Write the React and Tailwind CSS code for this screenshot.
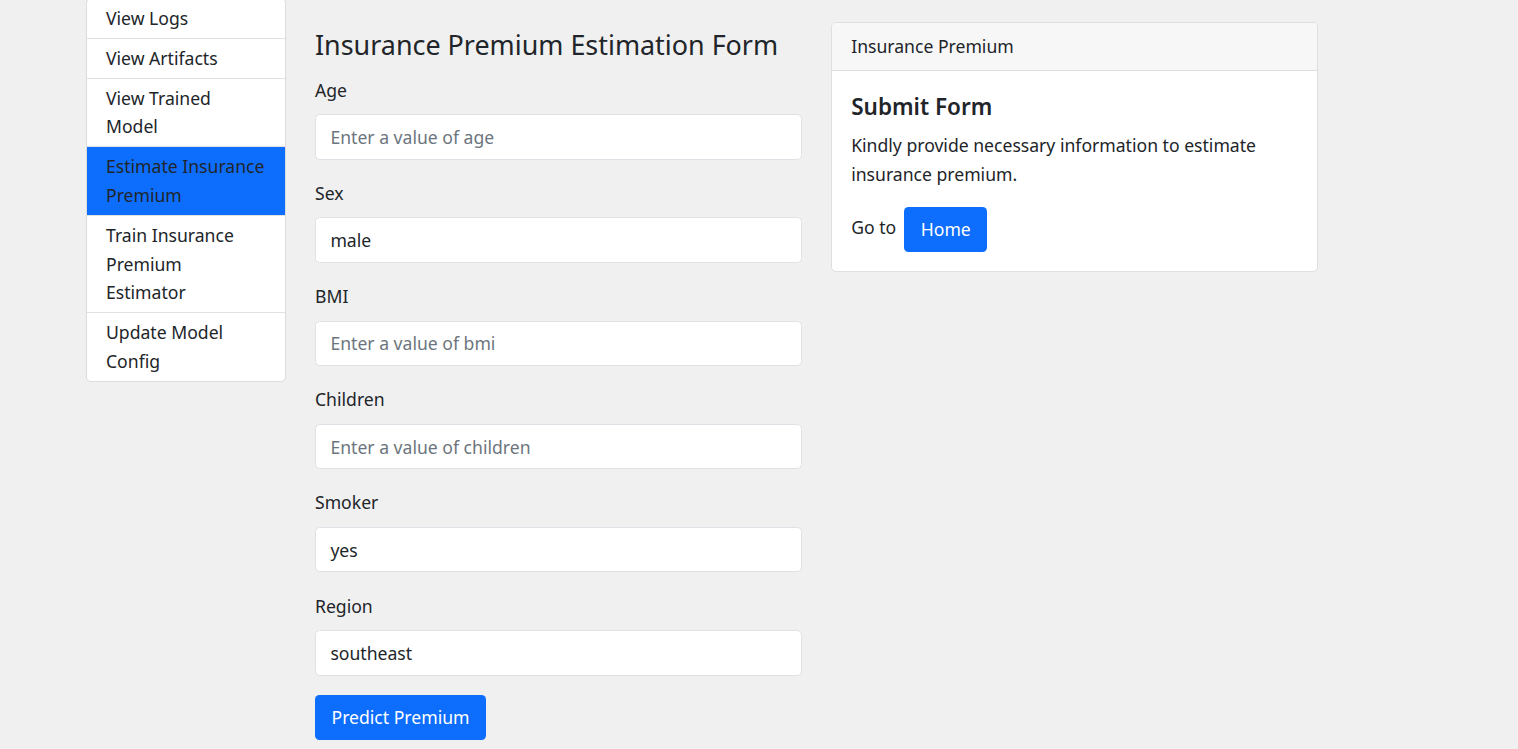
const FONT = { fontFamily: '"Noto Sans", "Open Sans", sans-serif' }

const NAV = [
  { label: 'View Logs' },
  { label: 'View Artifacts' },
  { label: 'View Trained Model' },
  { label: 'Estimate Insurance Premium', active: true },
  { label: 'Train Insurance Premium Estimator' },
  { label: 'Update Model Config', last: true },
]

const FIELDS = [
  { label: 'Age', placeholder: 'Enter a value of age' },
  { label: 'Sex', value: 'male' },
  { label: 'BMI', placeholder: 'Enter a value of bmi' },
  { label: 'Children', placeholder: 'Enter a value of children' },
  { label: 'Smoker', value: 'yes' },
  { label: 'Region', value: 'southeast' },
]

function Sidebar() {
  return (
    <div className="w-[200px] shrink-0 self-start -mt-[24px] bg-white border border-[#dcdcdc] rounded-[5px] overflow-hidden">
      {NAV.map((item) => (
        <div
          key={item.label}
          className={`pl-[19px] pr-[20px] py-[5px] text-[17.6px] leading-[28.8px] text-[#212529] ${
            item.last ? '' : 'border-b border-[#e2e2e2]'
          } ${item.active ? 'bg-[#0d6efd] border-[#0d6efd]' : ''}`}
        >
          {item.label}
        </div>
      ))}
    </div>
  )
}

function Field({ label, placeholder, value }) {
  return (
    <div className="mb-[19.2px]">
      <label className="block mb-[9.6px] text-[17.6px] leading-[28.8px] text-[#212529]">{label}</label>
      <input
        readOnly
        defaultValue={value}
        placeholder={placeholder}
        style={FONT}
        className="block w-full h-[45.6px] px-[14.4px] bg-white border border-[#dee2e6] rounded-[4.5px] text-[17.6px] text-[#212529] placeholder:text-[#6c757d] outline-none"
      />
    </div>
  )
}

function EstimateForm() {
  return (
    <div className="w-[487px] shrink-0 pt-[3px]">
      <h3 className="text-[26.9px] leading-[40.3px] font-normal text-[#212529] mb-[10.5px] whitespace-nowrap">
        Insurance Premium Estimation Form
      </h3>
      {FIELDS.map((f) => (
        <Field key={f.label} {...f} />
      ))}
      <button
        style={FONT}
        className="h-[45.6px] px-[16.5px] bg-[#0d6efd] text-white text-[17.6px] rounded-[4.5px]"
      >
        Predict Premium
      </button>
    </div>
  )
}

function InfoCard() {
  return (
    <div className="w-[487px] shrink-0 self-start bg-white border border-[#dfdfdf] rounded-[5px] overflow-hidden">
      <div className="px-[19.2px] py-[9.3px] bg-[#f7f7f7] border-b border-[#dfdfdf] text-[17.6px] leading-[28.8px] text-[#212529]">
        Insurance Premium
      </div>
      <div className="p-[19.2px] text-[#212529]">
        <h5 className="text-[22.5px] leading-[28.8px] font-semibold mb-[9.6px] pt-[2px]">Submit Form</h5>
        <p className="text-[17.6px] leading-[28.8px] mb-[18.5px]">
          Kindly provide necessary information to estimate insurance premium.
        </p>
        <div className="flex items-start">
          <span className="text-[17.6px] leading-[28.8px] mt-[6px] mr-[8px]">Go to</span>
          <button
            style={FONT}
            className="h-[45px] px-[16.5px] bg-[#0d6efd] text-white text-[17.6px] rounded-[4.5px]"
          >
            Home
          </button>
        </div>
      </div>
    </div>
  )
}

export default function App() {
  return (
    <div style={FONT} className="min-h-[749px] h-[749px] overflow-hidden bg-[#f0f0f0]">
      <div className="flex gap-[29px] pl-[86px] pt-[22px]">
        <Sidebar />
        <EstimateForm />
        <InfoCard />
      </div>
    </div>
  )
}
